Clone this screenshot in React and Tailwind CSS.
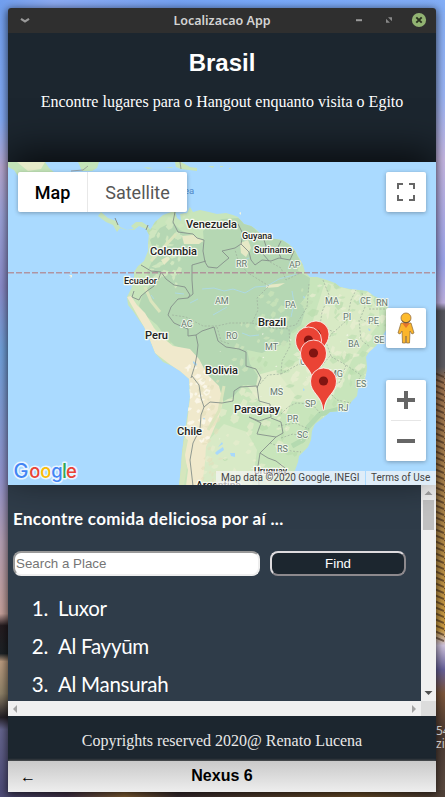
import React from "react";

const LAND =
  "M163 215 L155 222 L150 230 L148 226 L142 222 L136 222 L131 226 L134 229 L127 230 L120 227 L116 221 L108 218 L101 212 L98 216 L106 222 L113 225 L117 232 L120 228 L126 230 L134 230 L139 226 L146 229 L149 235 L148 243 L148 251 L144 261 L138 266 L134 272 L134 280 L131 289 L127 297 L128 305 L133 311 L139 320 L144 327 L150 340 L155 353 L163 362 L172 366 L180 371 L189 379 L190 397 L188 410 L186 424 L184 437 L182 453 L181 467 L179 486 L291 486 L294 473 L298 462 L299 456 L308 447 L311 440 L312 431 L315 424 L323 418 L330 412 L340 411 L348 407 L352 401 L357 396 L358 389 L364 383 L366 374 L367 367 L366 357 L369 352 L376 346 L382 337 L386 330 L390 324 L391 316 L388 307 L382 300 L374 296 L367 291 L350 289 L340 287 L335 283 L327 280 L317 277 L310 277 L305 272 L303 265 L299 258 L295 250 L289 244 L282 240 L270 238 L263 237 L257 230 L251 226 L244 224 L238 217 L233 215 L226 213 L217 214 L209 212 L200 210 L193 212 L190 207 L187 213 L180 214 L174 211 Z";

const AMAZON =
  "M150 240 L160 228 L172 222 L180 230 L196 237 L204 243 L203 231 L212 223 L222 219 L238 218 L252 226 L263 237 L283 240 L294 249 L299 259 L298 271 L310 278 L309 291 L302 302 L305 311 L301 325 L292 331 L288 342 L271 349 L262 353 L247 350 L250 364 L258 376 L256 386 L243 385 L234 396 L222 402 L220 390 L208 376 L199 363 L190 351 L175 346 L165 336 L157 325 L146 316 L139 306 L142 296 L150 285 L147 272 L155 255 Z";

const ANDES =
  "M127 297 L131 296 L137 305 L145 313 L154 328 L162 337 L173 346 L190 349 L199 359 L207 374 L219 386 L223 401 L219 417 L213 431 L206 447 L205 462 L202 486 L186 486 L188 470 L183 453 L187 424 L190 397 L189 379 L172 366 L155 353 L144 327 Z";

const BORDERS = [
  "M175 212 L173 222 L178 232 L193 234 L197 238 L204 240 L203 251 L205 262 L208 267 L217 268 L224 262 L229 258 L222 251 L235 248 L241 244 L243 234 L238 224",
  "M241 244 L249 252 L251 260 L255 265 L262 260 L271 261 L279 258 L290 260 L294 251 M263 237 L266 246 L263 254 L269 261 M281 241 L277 249 L281 258",
  "M141 265 L151 271 L161 272 L159 278 L154 286 L147 291 L141 296 L139 300 L132 297 L134 291 M161 272 L166 279 L174 285 L185 287 L190 295 L188 298 L178 299 L171 307 L168 315 L174 323 L183 327 L188 329 L188 336 L196 335 L202 331 L214 327 L218 341 L226 347 L239 349 L246 352 L246 366 L256 369 L261 378 L257 388",
  "M188 298 L193 294 L192 280 L192 265 L206 261 M196 335 L198 345 L197 354 L195 365 L191 378 M192 376 L199 385 L201 398 L204 407 L210 402 L222 403 L233 401 L234 391 L240 387 L257 386 L259 401 L270 404 L271 417 L259 421 L249 417 M204 407 L201 415 L200 429 L193 443 L190 460 L193 486",
  "M249 417 L261 423 L257 434 L276 437 L283 433 L281 422 L271 418 M276 437 L270 443 L260 453 L258 466 L259 485 M260 453 L268 458 L276 461 L285 468 L290 475",
];

const STATES = [
  "M172 315 L186 317 L203 326 L217 326 L230 323 L252 323 L258 310 L257 298 L269 286 L248 273 L239 263 L235 250",
  "M270 262 L281 268 L286 280 L300 273 M252 323 L276 329 L296 325 L307 307 L309 284 M323 280 L329 295 L322 312 L320 326 L334 332 L347 320 L351 300 L356 290",
  "M217 327 L221 341 L230 344 M258 326 L289 329 L290 346 L282 361 L281 374 L268 375 L258 386 M281 374 L299 364 L319 369 L330 356 L346 365 L361 375 L355 388",
  "M362 293 L365 307 L360 319 L379 326 M369 309 L387 309 M359 320 L361 340 L370 347 M281 414 L288 407 L296 403 L312 404 L320 413 M278 426 L295 423 L309 429 M281 438 L293 434 L309 438 M270 443 L291 451 L301 452 M331 356 L326 342 L333 332 M346 365 L340 382 L326 389 L337 400 L351 403",
];

const COUNTRIES = [
  ["Venezuela", 186, 228, 51, 11.5],
  ["Guyana", 242, 239, 30, 9.5],
  ["Suriname", 254, 253, 38, 9.5],
  ["Colombia", 150, 255, 47, 11.5],
  ["Ecuador", 124, 284, 33, 9.5],
  ["Brazil", 258, 326, 28, 11.5],
  ["Peru", 145, 339, 23, 11.5],
  ["Bolivia", 205, 374, 33, 11.5],
  ["Paraguay", 234, 413, 46, 11.5],
  ["Chile", 177, 435, 25, 11.5],
  ["Uruguay", 254, 474, 33, 9.5],
  ["Argentina", 196, 489, 45, 11.5],
];

const REGIONS = [
  ["RR", 236, 267], ["AP", 289, 268], ["AM", 215, 304], ["PA", 285, 308],
  ["MA", 325, 304], ["CE", 360, 304], ["RN", 376, 306], ["PI", 343, 320],
  ["PE", 368, 324], ["AC", 181, 327], ["RO", 226, 339], ["MT", 265, 350],
  ["BA", 348, 347], ["SE", 374, 343], ["GO", 300, 365], ["MG", 329, 377],
  ["MS", 270, 395], ["ES", 356, 387], ["SP", 305, 407], ["RJ", 338, 411],
  ["PR", 287, 422], ["SC", 297, 438], ["RS", 277, 452],
];

const PINS = [[316, 334], [308.5, 340], [313.5, 353], [323.5, 381]];

const noise = (n) => {
  const v = Math.sin(n * 127.1) * 43758.5453;
  return v - Math.floor(v);
};

const patches = (count, seed, x, y, w, h, size) =>
  Array.from({ length: count }, (_, i) => {
    const cx = x + noise(seed + i * 3) * w;
    const cy = y + noise(seed + i * 7 + 1) * h;
    const a = size * (0.4 + noise(seed + i * 11 + 2));
    const b = size * (0.3 + noise(seed + i * 5 + 3));
    return `M${cx} ${cy - b}l${a} ${b * 0.4}l${-a * 0.3} ${b}l${-a * 0.8} ${b * 0.5}l${-a * 0.7} ${-b * 0.8}z`;
  }).join("");

function Terrain() {
  return (
    <svg className="block h-full w-full" viewBox="8 162 428 323">
      <defs>
        <clipPath id="land"><path d={LAND} /></clipPath>
        <filter id="soft"><feGaussianBlur stdDeviation="0.6" /></filter>
      </defs>
      <rect x="8" y="162" width="428" height="323" fill="#aadaff" />
      <path d="M8 162H45L49 168L55 173L40 176H18L14 170L8 167Z M78 162H99L97 168L92 171L82 171Z" fill="#c3e4b8" />
      <path d="M17 162H45L41 169L28 171Z" fill="#e6ebc9" />
      <path d="M175 162h6l9 5 7 1v3l-16-2-5-2z M144 167l9 1-5 1z M164 168l8-1 1 1z M208 166h6l-1 2z M220 166h3v1h-3z M229 168h2v1h-2z" fill="#c8e4b8" />
      <path d="M180 162l1 7M71 171l12-1 5-4" stroke="#888" strokeWidth="0.7" fill="none" />
      <path d={LAND} fill="#c8e5bb" />
      <g clipPath="url(#land)">
        <path d="M325 282L378 298L380 322L362 346L352 360L340 385L325 400L300 402L282 400L264 386L278 372L304 357L310 330Z" fill="#d8eac5" />
        <path d="M205 444L224 424L247 432L257 450L252 486H199Z" fill="#d8eac6" />
        <path d="M242 379L276 370L295 395L286 414L262 405Z" fill="#e0ecca" />
        <path d="M180 235l14 0 8 6-2 8-18-2-6-5z" fill="#e6e9c6" />
        <g filter="url(#soft)">
          <path d={patches(75, 3, 145, 210, 245, 275, 5)} fill="#b9dcae" opacity=".65" />
          <path d={patches(80, 83, 285, 285, 100, 120, 4)} fill="#e8eed2" opacity=".7" />
          <path d={patches(50, 283, 285, 285, 105, 150, 4)} fill="#bddfb1" opacity=".6" />
          <path d={patches(45, 183, 195, 390, 95, 94, 4)} fill="#e9edcf" opacity=".6" />
          <path d="M340 409L320 414L308 427L303 440L292 446" stroke="#b4dab0" strokeWidth="5" fill="none" />
        </g>
        <path d={AMAZON} fill="#b5d7b3" />
        <g filter="url(#soft)">
          <path d={patches(30, 20, 145, 215, 40, 75, 4)} fill="#cfe6bf" />
          <path d={patches(24, 44, 225, 320, 60, 50, 3)} fill="#c8e1ba" />
          <path d={patches(16, 55, 260, 290, 55, 45, 3.5)} fill="#c5e1b8" />
          <path d="M182 236l10-1 11 6-4 3-15 0z M240 243l8-3 3 8-5 9-5-4z M266 285l10-1 9-1-7 4-12 1z M161 260l7-4 2 3-6 6z" fill="#e6e9c6" />
        </g>
        <path d={ANDES} fill="#f0e9cc" />
        <g filter="url(#soft)">
          <path d={patches(35, 63, 187, 365, 23, 80, 3)} fill="#faf6e7" />
          <path d={patches(34, 93, 200, 377, 20, 105, 3)} fill="#e2dfbd" opacity=".6" />
          <path d="M151 261L163 248L176 234M145 287L151 301L160 312M208 430L219 411L224 386" stroke="#dbe5bd" strokeWidth="3" fill="none" />
        </g>
        <path d={patches(35, 203, 214, 330, 160, 150, 1)} fill="#f2f5e6" />
        <path d="M179 485L181 453L184 437L188 440L185 455L187 468L184 485Z" fill="#d5e6bd" />
        <path d="M193 361l4 3-1 2-3-3z M217 451l6-4 1 3-7 5-2-2z M230 453l5 0 0 4-4-1z M203 418l2 0-1 2z M175 211l5 2 1 8-4-3z M218 447l4-5 1 2z M303 296l2 1-1 2z M303 388l2 2-2 1z M368 328l3 2-2 1z" fill="#a8d8fb" />
        <path d="M175 293l9 1 M202 289l12-1 10 3 9-2 12 4 10-6 12-1 12-7 18-5 M213 315l14-8 M190 303l8-4 M151 295l3 4 M242 333l8 3 9-1 M243 261l6-3 M292 291l2 12-3 14" fill="none" stroke="#abd9ee" strokeWidth="0.8" />
      </g>
      {STATES.map((d) => (
        <path key={d} d={d} fill="none" stroke="#9eaf9c" strokeWidth="0.7" strokeDasharray="2 1.5" />
      ))}
      {BORDERS.map((d) => (
        <path key={d} d={d} fill="none" stroke="#84908a" strokeWidth="0.9" />
      ))}
      <path d="M115 218l3 7M148 225l-2 5" stroke="#858d88" fill="none" />
      <path d="M69 275l3 0 0 2-3 2 2-2z M239 213l2-1 0 3z" fill="#f3f4df" />
      <path d="M8 272.7H435" stroke="#b08d98" strokeWidth="1.5" strokeDasharray="6 2" opacity=".9" />
      <g fontFamily="Roboto, sans-serif" paintOrder="stroke" strokeLinejoin="round">
        <text x="184" y="194" fontSize="9.5" fill="#5189c9">ea</text>
        {REGIONS.map(([name, x, y]) => (
          <text key={name} x={x} y={y} fontSize="9" fill="#65786f" stroke="#eef5e8" strokeWidth="2">{name}</text>
        ))}
        {COUNTRIES.map(([name, x, y, width, size]) => (
          <text key={name} x={x} y={y} fontSize={size} fontWeight="500" textLength={width} lengthAdjust="spacingAndGlyphs" fill="#222" stroke="#f7faf2" strokeWidth="2.5">{name}</text>
        ))}
      </g>
      {PINS.map(([x, y]) => (
        <g key={x} transform={`translate(${x} ${y})`}>
          <path d="M-.6 29.2C-1.6 13.5 -13 13 -13 0A13 13 0 1 1 13 0C13 13 1.6 13.5 .6 29.2Z" fill="#ea4335" stroke="#fff" strokeWidth=".8" />
          <circle r="4.6" fill="#811411" />
        </g>
      ))}
      <text y="478" fontFamily="Inter, sans-serif" fontSize="20" fontWeight="500" stroke="#e9f5ff" strokeWidth="3" paintOrder="stroke" strokeLinejoin="round">
        <tspan x="13.5" fill="#4285f4">G</tspan>
        <tspan x="29.3" fontSize="18.5" fill="#ea4335">o</tspan>
        <tspan x="40.3" fontSize="18.5" fill="#fbbc05">o</tspan>
        <tspan x="51.3" fontSize="18.5" fill="#4285f4">g</tspan>
        <tspan x="62" fill="#34a853">l</tspan>
        <tspan x="66" fontSize="18.5" fill="#ea4335">e</tspan>
      </text>
    </svg>
  );
}

function Wallpaper() {
  return (
    <svg className="absolute inset-0 h-full w-full" viewBox="0 0 445 797" preserveAspectRatio="none">
      <defs>
        <linearGradient id="left" x2="0" y2="1">
          <stop offset="0" stopColor="#719fee" />
          <stop offset=".15" stopColor="#83aaf5" />
          <stop offset=".21" stopColor="#b5a6ce" />
          <stop offset=".27" stopColor="#9ba2d8" />
          <stop offset=".36" stopColor="#8b8cca" />
          <stop offset=".44" stopColor="#70a1db" />
          <stop offset=".6" stopColor="#9293cc" />
          <stop offset=".68" stopColor="#b6a0b4" />
          <stop offset=".77" stopColor="#c6a29c" />
          <stop offset=".785" stopColor="#251c20" />
          <stop offset=".82" stopColor="#1c2226" />
          <stop offset=".83" stopColor="#bc9c80" />
          <stop offset=".87" stopColor="#908369" />
          <stop offset=".9" stopColor="#252127" />
          <stop offset=".915" stopColor="#65658e" />
          <stop offset="1" stopColor="#4d4b77" />
        </linearGradient>
        <linearGradient id="right" x2="0" y2="1">
          <stop offset="0" stopColor="#83aef6" />
          <stop offset=".12" stopColor="#9ab4f4" />
          <stop offset=".2" stopColor="#c4b5e0" />
          <stop offset=".33" stopColor="#9ba3ea" />
          <stop offset=".38" stopColor="#beb0e0" />
          <stop offset=".39" stopColor="#55555d" />
          <stop offset=".46" stopColor="#5d5b61" />
          <stop offset=".48" stopColor="#9d7350" />
          <stop offset=".64" stopColor="#ab8449" />
          <stop offset=".79" stopColor="#cc9c42" />
          <stop offset=".81" stopColor="#d0c4de" />
          <stop offset=".84" stopColor="#66609a" />
          <stop offset=".87" stopColor="#7c553a" />
          <stop offset=".92" stopColor="#4a3a33" />
          <stop offset="1" stopColor="#5e4c41" />
        </linearGradient>
        <linearGradient id="top">
          <stop offset="0" stopColor="#719fee" />
          <stop offset=".12" stopColor="#8caaf2" />
          <stop offset=".4" stopColor="#75a2f3" />
          <stop offset=".6" stopColor="#78a9fb" />
          <stop offset="1" stopColor="#83aef6" />
        </linearGradient>
        <linearGradient id="bottom">
          <stop offset="0" stopColor="#4d4b77" />
          <stop offset=".15" stopColor="#46364d" />
          <stop offset=".28" stopColor="#8a6537" />
          <stop offset=".4" stopColor="#3b2e32" />
          <stop offset=".8" stopColor="#70512a" />
          <stop offset="1" stopColor="#504139" />
        </linearGradient>
        <pattern id="facade" width="12" height="6" patternUnits="userSpaceOnUse">
          <path d="M0 0L12 5" stroke="#3e2718" strokeWidth="2" />
        </pattern>
      </defs>
      <rect width="445" height="797" fill="url(#left)" />
      <rect x="222" width="223" height="797" fill="url(#right)" />
      <rect width="445" height="12" fill="url(#top)" />
      <rect x="432" y="372" width="13" height="270" fill="url(#facade)" opacity=".6" />
      <rect y="790" width="445" height="7" fill="url(#bottom)" />
    </svg>
  );
}

function TitleBar() {
  return (
    <div className="grid h-[25px] shrink-0 grid-cols-[80px_1fr_80px] items-center rounded-t-[3px] bg-[#2f2f2f]">
      <svg className="ml-[12px] h-[10px] w-[10px]" viewBox="0 0 10 10">
        <path d="M1 2.8L5 5.4L9 2.8" fill="none" stroke="#999" strokeWidth="2.2" />
      </svg>
      <div className="whitespace-nowrap pt-[2px] text-center font-['Noto_Sans',sans-serif] text-[12.5px] font-semibold text-[#d4d4d4]">Localizacao App</div>
      <svg className="h-[25px] w-[80px]" viewBox="356 8 80 25">
        <path d="M356 20.2h6" stroke="#9a9a9a" strokeWidth="2" />
        <path d="M388 17.2h4v4zM386 18.8v4h4z" fill="#898989" />
        <circle cx="419" cy="20" r="7.1" fill="#92b372" />
        <path d="M416.3 17.3l5.4 5.4m0-5.4l-5.4 5.4" stroke="#29331f" strokeWidth="1.9" />
      </svg>
    </div>
  );
}

function MapControls() {
  const card = "rounded-[2px] bg-white shadow-[0_1px_4px_rgba(0,0,0,0.3)]";
  return (
    <>
      <div className={`absolute left-[10px] top-[10px] flex h-10 w-[169px] items-center font-['Roboto',sans-serif] text-[18px] ${card}`}>
        <div className="flex h-full w-[70px] items-center justify-center border-r border-[#e8e8e8] font-medium text-black">Map</div>
        <div className="flex-1 text-center text-[#565656]">Satellite</div>
      </div>
      <div className={`absolute right-[10px] top-[10px] flex size-10 items-center justify-center ${card}`}>
        <svg className="size-[18px]" viewBox="0 0 18 18">
          <path d="M1 6V1h5M12 1h5v5M17 12v5h-5M6 17H1v-5" fill="none" stroke="#666" strokeWidth="2" />
        </svg>
      </div>
      <div className={`absolute right-[10px] top-[146px] flex size-10 items-center justify-center ${card}`}>
        <svg className="h-[32px] w-[18px]" viewBox="0 0 18 32">
          <path d="M4 11h10l3 10-2 1-2-3-.5 12h-3L9 24l-.5 7h-3L5 19l-2 3-2-1z" fill="#fbb52b" stroke="#87673a" strokeWidth=".7" />
          <path d="M5 11h8L9 16z" fill="#e5762b" />
          <circle cx="9" cy="6" r="5" fill="#fdbb2d" stroke="#997044" strokeWidth=".8" />
          <path d="M4.8 8.5Q9 13 13.2 8.5" fill="none" stroke="#665138" />
        </svg>
      </div>
      <div className={`absolute right-[10px] top-[218px] flex h-[81px] w-10 flex-col items-center ${card}`}>
        <div className="flex h-10 items-center">
          <svg className="size-[18px]" viewBox="0 0 18 18"><path d="M0 9h18M9 0v18" stroke="#666" strokeWidth="4" /></svg>
        </div>
        <div className="h-px w-[30px] bg-[#e6e6e6]" />
        <div className="flex h-10 items-center">
          <svg className="size-[18px]" viewBox="0 0 18 18"><path d="M0 9h18" stroke="#666" strokeWidth="4" /></svg>
        </div>
      </div>
      <div className="absolute bottom-0 right-0 flex h-[14px] whitespace-nowrap font-['Roboto',sans-serif] text-[10px] leading-[14px] text-[#444]">
        <div className="w-[149px] bg-[#f5f5f5]/70 pl-[5px]">Map data ©2020 Google, INEGI</div>
        <div className="ml-px w-[70px] bg-[#f5f5f5]/70 pl-[5px]">Terms of Use</div>
      </div>
    </>
  );
}

function PlacesPanel() {
  return (
    <section className="flex h-[231px] shrink-0 flex-col">
      <div className="flex h-[216px]">
        <div className="flex-1 overflow-hidden bg-[#2f3c49] pl-[5px] font-['Lato',sans-serif] text-white">
          <h3 className="mt-[22px] h-6 whitespace-nowrap text-[17px] font-bold leading-6 tracking-[0.31px]">Encontre comida deliciosa por aí ...</h3>
          <div className="mt-[20px] flex h-[25px] gap-[10px]">
            <input
              className="w-[247px] rounded-[8px] border-2 border-b-[#eee] border-l-[#999] border-r-[#eee] border-t-[#999] bg-white px-[1px] font-['Liberation_Sans',sans-serif] text-[13.33px] placeholder:text-[#757575]"
              placeholder="Search a Place"
            />
            <button className="w-[136px] rounded-[8px] border-2 border-b-[#8d898d] border-l-[#dedbde] border-r-[#8d898d] border-t-[#dedbde] bg-[#1c262f] font-['Liberation_Sans',sans-serif] text-[13.33px]">Find</button>
          </div>
          <ol className="mt-[13px] text-[20.5px] leading-[38px] tracking-[-0.28px]">
            {["Luxor", "Al Fayyūm", "Al Mansurah"].map((place, i) => (
              <li key={place} className="flex h-[38px]">
                <span className="w-[35px] text-right">{i + 1}.</span>
                <span className="ml-[10px] whitespace-nowrap">{place}</span>
              </li>
            ))}
          </ol>
        </div>
        <div className="flex w-[15px] flex-col items-center justify-between bg-[#f0f0f0]">
          <div className="flex flex-col items-center">
            <svg className="h-[15px] w-[9px]" viewBox="0 0 9 15"><path d="M.5 10L4.5 6L8.5 10z" fill="#a3a3a3" /></svg>
            <div className="h-[30px] w-[11px] bg-[#c1c1c1]" />
          </div>
          <svg className="h-[15px] w-[9px]" viewBox="0 0 9 15"><path d="M.5 5H8.5L4.5 9z" fill="#505050" /></svg>
        </div>
      </div>
      <div className="flex h-[15px] bg-[#f0f0f0]">
        <div className="flex flex-1 items-center justify-between px-[5px]">
          <svg className="h-[8px] w-[4px]" viewBox="0 0 4 8"><path d="M4 0v8L0 4z" fill="#a3a3a3" /></svg>
          <svg className="h-[8px] w-[4px]" viewBox="0 0 4 8"><path d="M0 0v8l4-4z" fill="#a3a3a3" /></svg>
        </div>
        <div className="w-[15px] bg-[#dcdcdc]" />
      </div>
    </section>
  );
}

export default function App() {
  return (
    <div className="relative h-[797px] w-[445px] overflow-hidden">
      <Wallpaper />
      <div className="relative px-2 pt-2">
        <main className="flex h-[784px] w-[428px] flex-col rounded-t-[3px] shadow-[0_2px_8px_1px_rgba(0,0,0,0.65)]">
          <TitleBar />
          <div className="flex min-h-0 flex-1 flex-col overflow-hidden">
            <header className="h-[129px] shrink-0 bg-[#1c262f] text-center text-white">
              <h1 className="pt-[14px] font-['Liberation_Sans',sans-serif] text-[24px] font-bold leading-8">Brasil</h1>
              <p className="mt-[12px] font-['Liberation_Serif',serif] text-[16px] leading-[22px]">Encontre lugares para o Hangout enquanto visita o Egito</p>
            </header>
            <div className="relative z-10 h-[323px] shrink-0 shadow-[0_-10px_36px_rgba(0,0,0,0.7)]">
              <Terrain />
              <MapControls />
            </div>
            <PlacesPanel />
            <footer className="h-[45px] shrink-0 bg-[#1c262f] pt-[14px] text-center font-['Liberation_Serif',serif] text-[16px] leading-[22px] text-[#e9e9e9]">
              Copyrights reserved 2020@ Renato Lucena
            </footer>
            <div className="relative grid h-[31px] shrink-0 grid-cols-[40px_1fr_40px] items-center bg-linear-to-b from-[#c9c9c9] to-[#eee] font-['Liberation_Sans',sans-serif] text-black shadow-[0_-1px_2px_#555]">
              <span className="pl-[12px] text-[16px] leading-5">←</span>
              <strong className="pb-[2px] text-center text-[16px] leading-5">Nexus 6</strong>
            </div>
          </div>
        </main>
      </div>
      <div className="absolute left-[436px] top-[724px] w-[9px] overflow-hidden whitespace-nowrap font-['Noto_Sans',sans-serif] text-[12px] leading-[13px] text-[#c4c4c4]">
        <div>54</div>
        <div>zi</div>
      </div>
    </div>
  );
}
